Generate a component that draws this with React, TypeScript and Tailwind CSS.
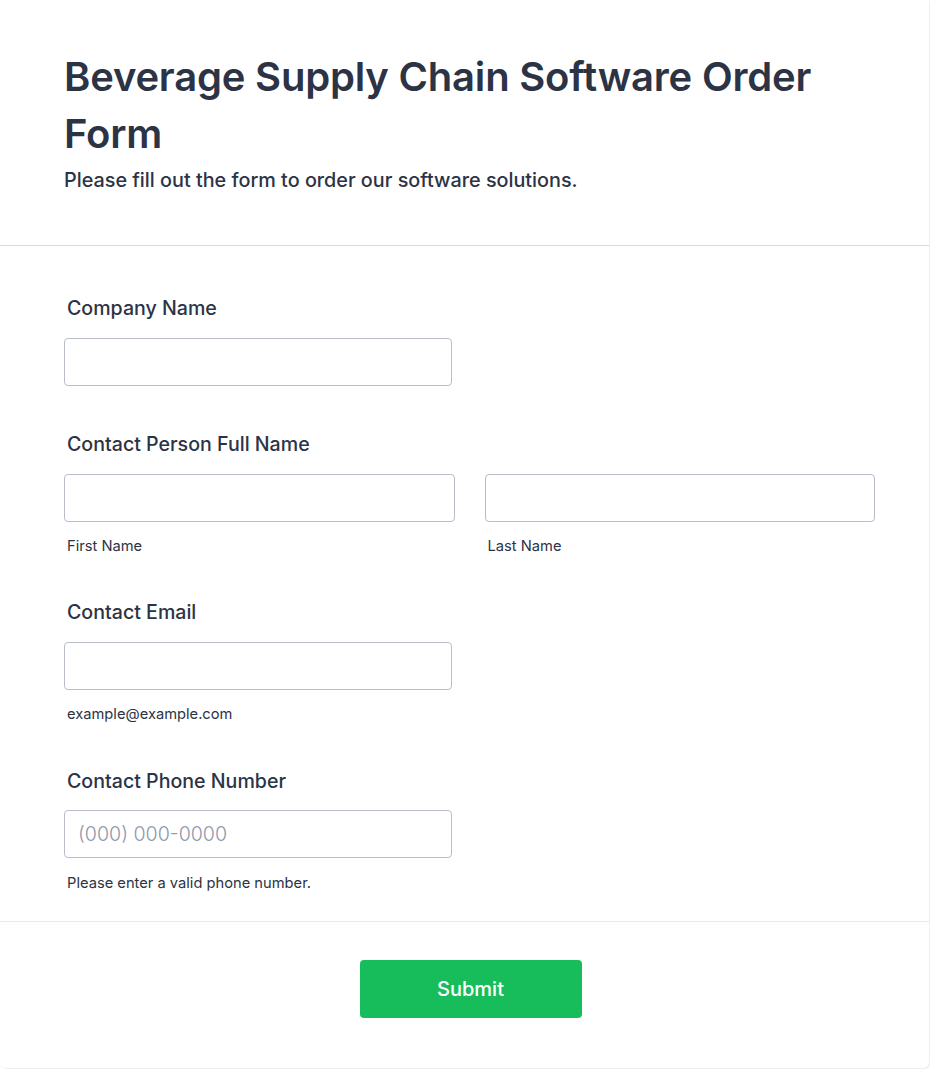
import React from 'react';

const inputCls =
  'block h-[48px] rounded-[4px] border border-[#b8bdc9] bg-white px-[13px] text-[19.6px] font-light text-[#2c3345] outline-none placeholder:text-[#8f99ac]';

const Label: React.FC<{ children: React.ReactNode }> = ({ children }) => (
  <label className="block pl-[3px] text-[19.6px] leading-[27px] font-medium text-[#2c3345]">{children}</label>
);

const SubLabel: React.FC<{ children: React.ReactNode; className?: string }> = ({ children, className = 'mt-[13px]' }) => (
  <span className={`${className} block pl-[3px] text-[14.7px] leading-[22px] text-[#2c3345]`}>{children}</span>
);

const App: React.FC = () => {
  return (
    <div className="min-h-screen bg-white" style={{ fontFamily: 'Inter, "Noto Sans", sans-serif' }}>
      <div className="w-[929px] rounded-b-md bg-white shadow-[1px_1px_2px_rgba(40,45,80,0.10)]">
        {/* Header */}
        <div className="px-16 pt-[48px] pb-[51px]">
          <h1 className="text-[40px] leading-[57px] font-semibold text-[#2c3345] tracking-[-0.2px]">
            Beverage Supply Chain Software Order Form
          </h1>
          <p className="mt-[5px] text-[19.8px] leading-[27px] font-medium text-[#2c3345]">
            Please fill out the form to order our software solutions.
          </p>
        </div>

        <div className="h-[1px] bg-[#d8d9e6]" />

        {/* Fields */}
        <form className="flex flex-col gap-[42px] px-16 pt-[49px] pb-[27px]">
          <div className="mb-[3px]">
            <Label>Company Name</Label>
            <input type="text" className={`${inputCls} mt-[16px] w-[388px]`} />
          </div>

          <div>
            <Label>Contact Person Full Name</Label>
            <div className="mt-[16px] grid w-[811px] grid-cols-2 gap-[30px]">
              <div>
                <input type="text" className={`${inputCls} w-full`} />
                <SubLabel>First Name</SubLabel>
              </div>
              <div>
                <input type="text" className={`${inputCls} w-full`} />
                <SubLabel>Last Name</SubLabel>
              </div>
            </div>
          </div>

          <div>
            <Label>Contact Email</Label>
            <input type="email" className={`${inputCls} mt-[16px] w-[388px]`} />
            <SubLabel>example@example.com</SubLabel>
          </div>

          <div className="mt-[1px]">
            <Label>Contact Phone Number</Label>
            <input type="tel" placeholder="(000) 000-0000" className={`${inputCls} mt-[15px] w-[388px]`} />
            <SubLabel className="mt-[14px]">Please enter a valid phone number.</SubLabel>
          </div>
        </form>

        <div className="h-[1px] bg-[#e8e9f0]" />

        {/* Submit */}
        <div className="flex justify-center pt-[38px] pb-[50px]">
          <button
            type="button"
            className="ml-[12px] h-[58px] w-[222px] rounded-[4px] bg-[#18bd5b] text-[20px] font-medium text-white"
          >
            Submit
          </button>
        </div>
      </div>
    </div>
  );
};

export default App;
